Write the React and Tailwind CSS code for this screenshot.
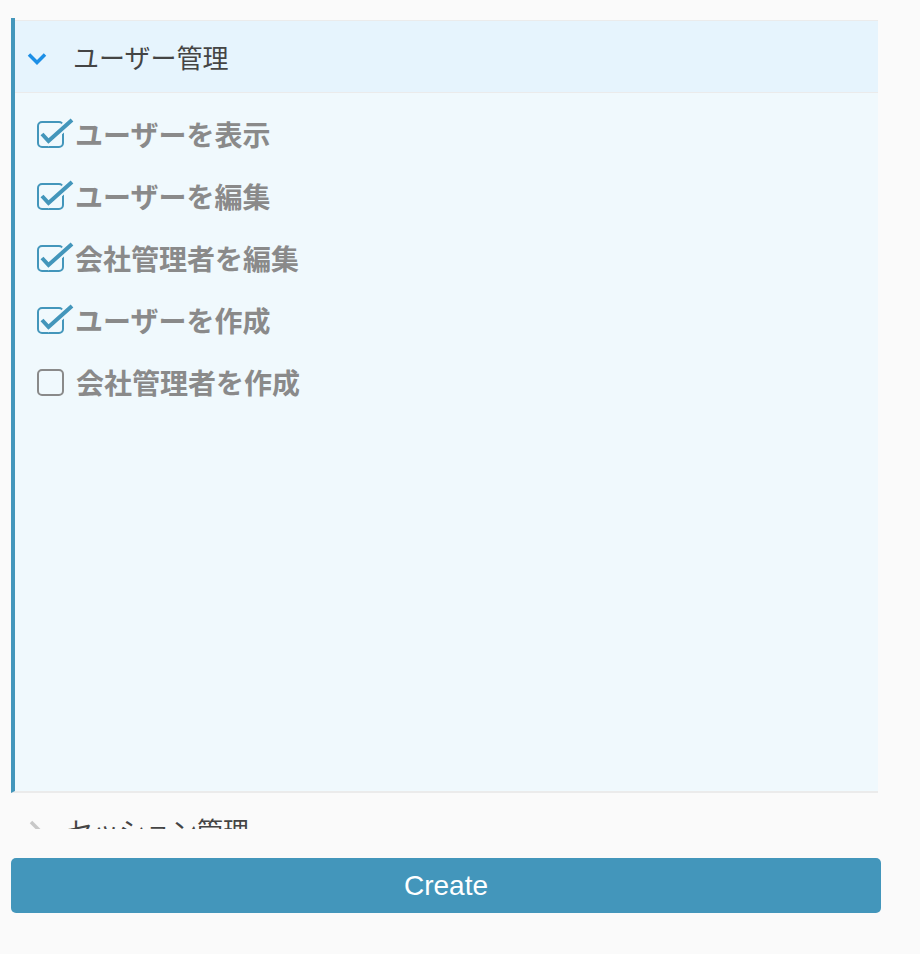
import React from "react";

const ITEMS = [
  { label: "ユーザーを表示", checked: true },
  { label: "ユーザーを編集", checked: true },
  { label: "会社管理者を編集", checked: true },
  { label: "ユーザーを作成", checked: true },
  { label: "会社管理者を作成", checked: false },
];

function CheckBox({ checked }) {
  if (!checked) {
    return (
      <div className="w-[27px] h-[27px] shrink-0 rounded-[5px] border-2 border-[#8a8a8a]" />
    );
  }
  return (
    <div className="relative w-[27px] h-[27px] shrink-0">
      <div className="absolute inset-0 rounded-[5px] border-2 border-[#4396bb]" />
      <svg
        className="absolute left-0 top-[-6px]"
        width="40"
        height="36"
        viewBox="0 0 40 36"
        fill="none"
      >
        <path d="M5 19 L11.5 26 L35 5" stroke="#f0f9fd" strokeWidth="8" strokeLinejoin="miter" />
        <path d="M5 19 L11.5 26 L35 5" stroke="#4396bb" strokeWidth="4" strokeLinejoin="miter" />
      </svg>
    </div>
  );
}

export default function App() {
  const jp = { fontFamily: '"Noto Sans CJK JP", "Noto Sans", sans-serif' };
  return (
    <div className="min-h-screen bg-[#fafafa] pl-[11px] pt-[18px]">
      <div className="w-[867px] h-[811px] overflow-hidden" style={jp}>
        {/* Item 1 (open) */}
        <div className="border-l-4 border-b-2 border-l-[#4396bb] border-b-[#ebebeb]">
          <div className="h-[2px] bg-[#fafafa]" />
          <div className="h-[73px] border-y border-[#ebebeb] bg-[#e6f4fd] flex items-center pl-[12px]">
            <svg className="mt-[5px]" width="20" height="14" viewBox="0 0 20 14" fill="none">
              <path d="M2 2.5 L10 10.5 L18 2.5" stroke="#1d8fe6" strokeWidth="3.5" />
            </svg>
            <span className="ml-[26px] text-[26px] text-[#444] leading-none">ユーザー管理</span>
          </div>
          <div className="h-[698px] bg-[#f0f9fd] pt-[10px] pl-[22px]">
            {ITEMS.map((it) => (
              <div key={it.label} className="h-[62px] flex items-center">
                <CheckBox checked={it.checked} />
                <span
                  className={
                    "text-[28px] font-bold text-[#8a8a8a] leading-none " +
                    (it.checked ? "ml-[11px]" : "ml-[12px]")
                  }
                >
                  {it.label}
                </span>
              </div>
            ))}
          </div>
        </div>
        {/* Item 2 (closed) */}
        <div className="h-[73px] flex items-center pl-[18px]">
          <svg width="12" height="20" viewBox="0 0 12 20" fill="none">
            <path d="M2 2 L10 10 L2 18" stroke="#c8c8c8" strokeWidth="3.5" />
          </svg>
          <span className="ml-[26px] text-[26px] text-[#444] leading-none">セッション管理</span>
        </div>
      </div>
      <button
        className="mt-[29px] w-[870px] h-[55px] rounded-[5px] bg-[#4396bb] text-white text-[28px]"
        style={{ fontFamily: '"Liberation Sans", Arial, sans-serif' }}
      >
        Create
      </button>
    </div>
  );
}
